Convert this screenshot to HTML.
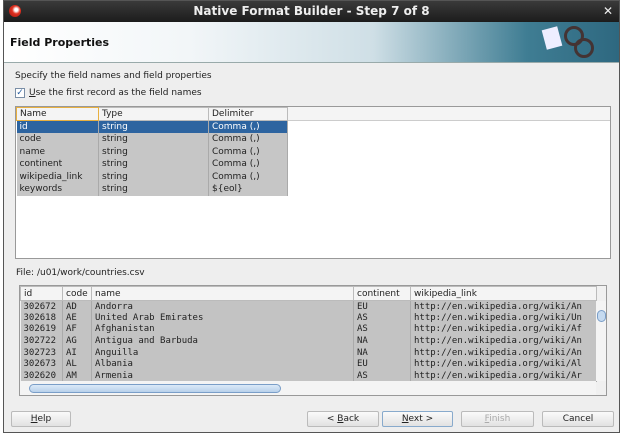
<!DOCTYPE html>
<html><head><style>
*{margin:0;padding:0;box-sizing:border-box}
body{width:625px;height:436px;background:#fff;font-family:"DejaVu Sans","Liberation Sans",sans-serif;font-size:9px;color:#222;position:relative;overflow:hidden}
.win{position:absolute;left:3px;top:0;width:617px;height:433px;background:#eeeeee;border:1px solid #555}
.title{position:absolute;left:0;top:0;width:100%;height:21px;background:linear-gradient(#3a3a3a,#1c1c1c);color:#eee;font-weight:bold;font-size:12px;text-align:center;line-height:21px}
.hdr{position:absolute;left:0;top:21px;width:100%;height:41px;background:linear-gradient(90deg,#fff 0%,#f2f6f8 30%,#cfdfe6 60%,#3f7d93 85%,#2e6880 100%);border-bottom:1px solid #9aa}
.hdr b{position:absolute;left:6px;top:14px;font-size:11px;color:#111}
.abs{position:absolute}
table{border-collapse:collapse;font-size:9px}
td,th{padding:0 3px;text-align:left;font-weight:normal;white-space:nowrap;overflow:hidden}
.t1 th{background:#f4f4f4;border:1px solid #bbb;height:13px}
.t1 td{background:#c6c6c6;border-right:1px solid #aaa;height:12.5px}
.t1 tr.sel td{background:#2d64a0;color:#fff}
.t2{font-family:"DejaVu Sans Mono","Liberation Mono",monospace;font-size:9px}
.t2 th{background:#f4f4f4;border:1px solid #bbb;height:14px;font-family:"DejaVu Sans",sans-serif}
.t2 td{background:#c3c3c3;border-right:1px solid #aaa;height:11.6px}
.btn{position:absolute;top:410px;height:16px;border:1px solid #bbb;border-radius:2px;background:linear-gradient(#fafafa,#e2e2e2);text-align:center;line-height:14px;font-size:9px}
</style></head><body>
<div class="win">
<div class="title">Native Format Builder - Step 7 of 8<span style="position:absolute;right:6px;font-weight:normal">✕</span>
<span style="position:absolute;left:5px;top:4px;width:12px;height:12px;border-radius:50%;background:radial-gradient(circle at 60% 40%,#fff 15%,#e03020 40%,#a01810)"></span></div>
<div class="hdr"><b>Field Properties</b>
<div class="abs" style="left:540px;top:6px;width:16px;height:20px;background:#eef;transform:rotate(-15deg)"></div>
<div class="abs" style="left:560px;top:4px;width:20px;height:20px;border-radius:50%;border:3px solid #433"></div>
<div class="abs" style="left:570px;top:16px;width:20px;height:20px;border-radius:50%;border:3px solid #433"></div>
</div>
<div class="abs" style="left:11px;top:70px">Specify the field names and field properties</div>
<div class="abs" style="left:11px;top:87px;width:10px;height:10px;border:1px solid #7a8ea6;background:#fff;color:#2a5fa0;font-size:9px;line-height:8px;text-align:center">✓</div>
<div class="abs" style="left:25px;top:87px"><u>U</u>se the first record as the field names</div>
<div class="abs" style="left:11px;top:105px;width:596px;height:153px;background:#fff;border:1px solid #999">
<div class="abs" style="left:0;top:0;width:100%;height:14px;background:#f4f4f4;border-bottom:1px solid #ccc"></div>
<table class="t1 abs" style="left:0;top:0;width:271px;table-layout:fixed">
<colgroup><col style="width:82px"><col style="width:110px"><col style="width:79px"></colgroup>
<tr><th style="border-color:#e8b040">Name</th><th>Type</th><th>Delimiter</th></tr>
<tr class="sel"><td>id</td><td>string</td><td>Comma (,)</td></tr>
<tr><td>code</td><td>string</td><td>Comma (,)</td></tr>
<tr><td>name</td><td>string</td><td>Comma (,)</td></tr>
<tr><td>continent</td><td>string</td><td>Comma (,)</td></tr>
<tr><td>wikipedia_link</td><td>string</td><td>Comma (,)</td></tr>
<tr><td>keywords</td><td>string</td><td>${eol}</td></tr>
</table></div>
<div class="abs" style="left:12px;top:267px">File: /u01/work/countries.csv</div>
<div class="abs" style="left:15px;top:284px;width:588px;height:111px;background:#f0f0f0;border:1px solid #999;overflow:hidden">
<table class="t2 abs" style="left:0;top:0;width:576px;table-layout:fixed">
<colgroup><col style="width:42px"><col style="width:29px"><col style="width:262px"><col style="width:57px"><col style="width:186px"></colgroup>
<tr><th>id</th><th>code</th><th>name</th><th>continent</th><th>wikipedia_link</th></tr>
<tr><td>302672</td><td>AD</td><td>Andorra</td><td>EU</td><td>http://en.wikipedia.org/wiki/An</td></tr>
<tr><td>302618</td><td>AE</td><td>United Arab Emirates</td><td>AS</td><td>http://en.wikipedia.org/wiki/Un</td></tr>
<tr><td>302619</td><td>AF</td><td>Afghanistan</td><td>AS</td><td>http://en.wikipedia.org/wiki/Af</td></tr>
<tr><td>302722</td><td>AG</td><td>Antigua and Barbuda</td><td>NA</td><td>http://en.wikipedia.org/wiki/An</td></tr>
<tr><td>302723</td><td>AI</td><td>Anguilla</td><td>NA</td><td>http://en.wikipedia.org/wiki/An</td></tr>
<tr><td>302673</td><td>AL</td><td>Albania</td><td>EU</td><td>http://en.wikipedia.org/wiki/Al</td></tr>
<tr><td>302620</td><td>AM</td><td>Armenia</td><td>AS</td><td>http://en.wikipedia.org/wiki/Ar</td></tr>
</table>
<div class="abs" style="left:576px;top:15px;width:11px;height:80px;background:#f4f4f4"></div>
<div class="abs" style="left:577px;top:24px;width:9px;height:12px;border-radius:5px;background:#c5daf0;border:1px solid #7a9ec8"></div>
<div class="abs" style="left:0;top:95px;width:576px;height:15px;background:#f4f4f4"></div>
<div class="abs" style="left:9px;top:98px;width:252px;height:9px;border-radius:5px;background:linear-gradient(#dceaf8,#b8d0ea);border:1px solid #7a9ec8"></div>
</div>
<div class="btn" style="left:7px;width:60px"><u>H</u>elp</div>
<div class="btn" style="left:303px;width:72px">&lt; <u>B</u>ack</div>
<div class="btn" style="left:378px;width:71px;border-color:#88aacc"><u>N</u>ext &gt;</div>
<div class="btn" style="left:457px;width:73px;color:#aaa"><u>F</u>inish</div>
<div class="btn" style="left:538px;width:72px">Cancel</div>
</div>
</body></html>
